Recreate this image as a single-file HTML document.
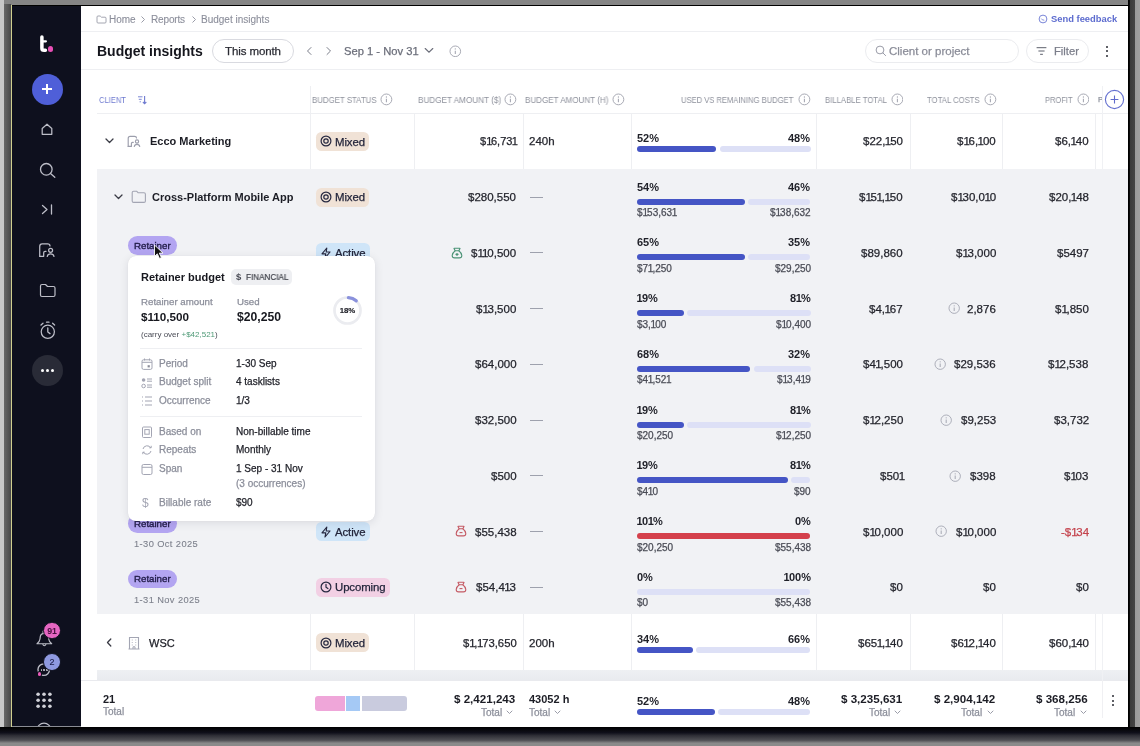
<!DOCTYPE html><html><head><meta charset="utf-8"><style>
html,body{margin:0;padding:0;}
body{width:1140px;height:746px;position:relative;overflow:hidden;background:#9a9a9a;font-family:"Liberation Sans",sans-serif;}
.t{position:absolute;white-space:nowrap;will-change:transform;}
.r{-webkit-text-stroke:0.25px currentColor;}
.b{position:absolute;}
</style></head><body>
<div class="b" style="left:0px;top:0px;width:1140px;height:4.5px;background:#858585"></div>
<div class="b" style="left:0px;top:4.5px;width:1140px;height:1px;background:#d8d8d8"></div>
<div class="b" style="left:0px;top:0px;width:4px;height:746px;background:#c8c8c8"></div>
<div class="b" style="left:4px;top:4px;width:6.5px;height:742px;background:linear-gradient(90deg,#686868,#484848)"></div>
<div class="b" style="left:1128px;top:0px;width:12px;height:746px;background:linear-gradient(90deg,#000 0,#000 12%,#3a3a3a 15%,#444 55%,#9a9a9a 60%,#a0a0a0)"></div>
<div class="b" style="left:0px;top:727px;width:1140px;height:19px;background:linear-gradient(180deg,#000 0,#0f0f1a 30%,#2e2e36 45%,#505055 70%,#8a8a8a 85%)"></div>
<div class="b" style="left:11px;top:5px;width:1118px;height:1px;background:#000"></div>
<div class="b" style="left:10.5px;top:5px;width:1.5px;height:722px;background:#d0d090"></div>
<div class="b" style="left:12px;top:6px;width:1116px;height:721px;background:#fff"></div>
<div class="b" style="left:12px;top:6px;width:69px;height:721px;background:#0e101e"></div>
<div class="b" style="left:81px;top:31px;width:1047px;height:1px;background:#eeeff2"></div>
<div class="b" style="left:81px;top:69px;width:1047px;height:1px;background:#eeeff2"></div>
<svg class="b" style="left:36px;top:33px;" width="20" height="22" viewBox="0 0 20 22" fill="none"><path d="M5.9 4 V15.2 Q5.9 17.3 8.1 17.3 H9.4" stroke="#fff" stroke-width="3.5" stroke-linecap="round" stroke-linejoin="round"/><path d="M5.9 8.3 H9.9" stroke="#fff" stroke-width="2.2" stroke-linecap="round"/></svg>
<div class="b" style="left:48.1px;top:46.4px;width:5.4px;height:5.4px;background:#e84fb6;border-radius:50%"></div>
<div class="b" style="left:31.8px;top:73.5px;width:31px;height:31px;background:#4f5fd8;border-radius:50%"></div>
<div class="b" style="left:42px;top:88.2px;width:10px;height:1.7px;background:#fff"></div>
<div class="b" style="left:46.2px;top:84px;width:1.7px;height:10px;background:#fff"></div>
<svg class="b" style="left:40px;top:122px;" width="14" height="14" viewBox="0 0 14 14" fill="none"><path d="M2.2 6.5 L7 2.2 L11.8 6.5 V12.3 H2.2 Z" stroke="#bdbec8" stroke-width="1.25" stroke-linejoin="round"/></svg>
<svg class="b" style="left:39px;top:162px;" width="18" height="17" viewBox="0 0 18 17" fill="none"><circle cx="7.3" cy="7.3" r="5.8" stroke="#bdbec8" stroke-width="1.3"/><path d="M11.5 11.5 L15.8 15.3" stroke="#bdbec8" stroke-width="1.3" stroke-linecap="round"/></svg>
<svg class="b" style="left:41px;top:204px;" width="13" height="12" viewBox="0 0 13 12" fill="none"><path d="M1.5 1.5 L6 5.5 L1.5 9.5" stroke="#bdbec8" stroke-width="1.3" stroke-linecap="round" stroke-linejoin="round"/><path d="M10.5 1 V10" stroke="#bdbec8" stroke-width="1.3" stroke-linecap="round"/></svg>
<svg class="b" style="left:37.3px;top:241px" width="19.8" height="18.6" viewBox="0 0 16 15" fill="none"><path d="M2.2 12.4 V4.4 Q2.2 2.4 4.2 2.4 H8.5 Q10.5 2.4 10.5 4" stroke="#bdbec8" stroke-width="1.0" stroke-linecap="round"/><path d="M2.2 12.4 H5.4 V9.5 Q5.4 8.3 6.6 8.3 H7.3" stroke="#bdbec8" stroke-width="1.0" stroke-linecap="round" stroke-linejoin="round"/><circle cx="11" cy="7.5" r="1.6" stroke="#bdbec8" stroke-width="1.0"/><path d="M8.3 12.5 Q8.6 10.3 11 10.3 Q13.4 10.3 13.7 12.5" stroke="#bdbec8" stroke-width="1.0" stroke-linecap="round"/></svg>
<svg class="b" style="left:38.5px;top:283px;" width="18" height="15" viewBox="0 0 18 15" fill="none"><path d="M1.5 3 Q1.5 1.5 3 1.5 H6.5 L8.5 3.5 H14.5 Q16 3.5 16 5 V12 Q16 13.5 14.5 13.5 H3 Q1.5 13.5 1.5 12 Z" stroke="#bdbec8" stroke-width="1.2" stroke-linejoin="round"/></svg>
<svg class="b" style="left:38.5px;top:321px;" width="18" height="19" viewBox="0 0 18 19" fill="none"><circle cx="8.8" cy="10.8" r="6.6" stroke="#bdbec8" stroke-width="1.25"/><path d="M8.8 7 V11 L11 12.6" stroke="#bdbec8" stroke-width="1.3" stroke-linecap="round"/><path d="M2 4 L4 2.2 M15.6 4 L13.6 2.2 M7.5 1.2 H10" stroke="#bdbec8" stroke-width="1.3" stroke-linecap="round"/></svg>
<div class="b" style="left:31.8px;top:354.5px;width:31px;height:31px;background:#292b37;border-radius:50%"></div>
<div class="b" style="left:41px;top:368.5px;width:3px;height:3px;background:#fff;border-radius:50%"></div>
<div class="b" style="left:46px;top:368.5px;width:3px;height:3px;background:#fff;border-radius:50%"></div>
<div class="b" style="left:51px;top:368.5px;width:3px;height:3px;background:#fff;border-radius:50%"></div>
<svg class="b" style="left:35px;top:627px;" width="20" height="22" viewBox="0 0 20 22" fill="none"><circle cx="9.35" cy="4.9" r="1.4" stroke="#bdbec8" stroke-width="1.2"/><path d="M2 16.75 Q4.6 15 5 12 L5.3 9.5 Q5.8 6.3 9.35 6.3 Q12.9 6.3 13.4 9.5 L13.7 12 Q14.1 15 16.7 16.75 Z" stroke="#bdbec8" stroke-width="1.2" stroke-linejoin="round"/><path d="M7.6 17.3 Q9.35 20.2 11.1 17.3" stroke="#bdbec8" stroke-width="1.2"/></svg>
<div class="b" style="left:43.1px;top:621.5px;width:17.8px;height:17.8px;background:#e666c2;border-radius:50%;box-sizing:border-box;border:1.2px solid #0e101e"></div>
<div class="t" style="left:43.1px;top:625.60px;font-size:8.8px;font-weight:700;color:#4a1040;line-height:10px;width:17.8px;text-align:center;letter-spacing:-0.2px">91</div>
<svg class="b" style="left:35px;top:661px;" width="18" height="18" viewBox="0 0 18 18" fill="none"><circle cx="8.75" cy="8.6" r="5.8" stroke="#bdbec8" stroke-width="1.35"/></svg>
<div class="b" style="left:40.75px;top:669.1px;width:1.5px;height:1.5px;background:#bdbec8;border-radius:50%"></div>
<div class="b" style="left:43.45px;top:669.1px;width:1.5px;height:1.5px;background:#bdbec8;border-radius:50%"></div>
<div class="b" style="left:46.15px;top:669.1px;width:1.5px;height:1.5px;background:#bdbec8;border-radius:50%"></div>
<div class="b" style="left:37.6px;top:672.3px;width:3.4px;height:3.4px;background:#e85bb8;border-radius:50%;box-shadow:0 0 0 1px #0e101e"></div>
<div class="b" style="left:42.9px;top:653.2px;width:17.8px;height:17.8px;background:#8e99e0;border-radius:50%;box-sizing:border-box;border:1.2px solid #0e101e"></div>
<div class="t r" style="left:42.9px;top:657.30px;font-size:9px;font-weight:400;color:#1a1d48;line-height:10px;width:17.8px;text-align:center;-webkit-text-stroke:0.1px currentColor">2</div>
<svg class="b" style="left:34px;top:690px;" width="20" height="20" viewBox="0 0 20 20" fill="none"><circle cx="4.100000000000001" cy="4.2999999999999545" r="1.8" fill="#d0d1d8"/><circle cx="10" cy="4.2999999999999545" r="1.8" fill="#d0d1d8"/><circle cx="15.899999999999999" cy="4.2999999999999545" r="1.8" fill="#d0d1d8"/><circle cx="4.100000000000001" cy="10.299999999999955" r="1.8" fill="#d0d1d8"/><circle cx="10" cy="10.299999999999955" r="1.8" fill="#d0d1d8"/><circle cx="15.899999999999999" cy="10.299999999999955" r="1.8" fill="#d0d1d8"/><circle cx="4.100000000000001" cy="16.200000000000045" r="1.8" fill="#d0d1d8"/><circle cx="10" cy="16.200000000000045" r="1.8" fill="#d0d1d8"/><circle cx="15.899999999999999" cy="16.200000000000045" r="1.8" fill="#d0d1d8"/></svg>
<svg class="b" style="left:35.2px;top:720px;" width="18" height="7" viewBox="0 0 18 7" fill="none"><circle cx="9" cy="10" r="6.8" stroke="#bdbec8" stroke-width="1.2"/></svg>
<div class="b" style="left:12px;top:726px;width:69px;height:1px;background:#8a8c94"></div>
<svg class="b" style="left:96px;top:14.5px;" width="11" height="9" viewBox="0 0 11 9" fill="none"><path d="M1 2 Q1 1 2 1 H4.2 L5.4 2.2 H9 Q10 2.2 10 3.2 V7 Q10 8 9 8 H2 Q1 8 1 7 Z" stroke="#9a9ca8" stroke-width="0.9"/></svg>
<div class="t r" style="left:109.3px;top:13.20px;font-size:10px;font-weight:400;color:#8b8e9a;line-height:14px;-webkit-text-stroke:0.1px currentColor">Home</div>
<svg class="b" style="left:140px;top:15px;" width="6" height="9" viewBox="0 0 6 9" fill="none"><path d="M1.5 1.5 L4.5 4.5 L1.5 7.5" stroke="#9a9ca8" stroke-width="1"/></svg>
<div class="t r" style="left:150.9px;top:13.20px;font-size:10px;font-weight:400;color:#8b8e9a;line-height:14px;letter-spacing:-0.15px;-webkit-text-stroke:0.1px currentColor">Reports</div>
<svg class="b" style="left:190.5px;top:15px;" width="6" height="9" viewBox="0 0 6 9" fill="none"><path d="M1.5 1.5 L4.5 4.5 L1.5 7.5" stroke="#9a9ca8" stroke-width="1"/></svg>
<div class="t r" style="left:201.4px;top:13.20px;font-size:10px;font-weight:400;color:#8b8e9a;line-height:14px;-webkit-text-stroke:0.1px currentColor">Budget insights</div>
<svg class="b" style="left:1038px;top:13.5px;" width="10" height="10" viewBox="0 0 10 10" fill="none"><circle cx="5" cy="5" r="3.9" stroke="#7a86d8" stroke-width="1"/><path d="M3.3 4.6 Q4 6.3 6.3 6.2" stroke="#7a86d8" stroke-width="0.9"/></svg>
<div class="t" style="left:1051px;top:12.00px;font-size:9.4px;font-weight:700;color:#5d6ccf;line-height:14px;">Send feedback</div>
<div class="t" style="left:96.7px;top:44.00px;font-size:14px;font-weight:700;color:#15161d;line-height:14px;">Budget insights</div>
<div class="b" style="left:212.3px;top:39px;width:81.7px;height:24.3px;box-sizing:border-box;border:1px solid #d9dae0;border-radius:13px;background:#fff"></div>
<div class="t r" style="left:225px;top:44.20px;font-size:11.5px;font-weight:400;color:#2a2b33;line-height:14px;letter-spacing:-0.1px">This month</div>
<svg class="b" style="left:305px;top:45px;" width="9" height="12" viewBox="0 0 9 12" fill="none"><path d="M6 2.5 L2.5 6 L6 9.5" stroke="#7b7e8a" stroke-width="1" stroke-linecap="round"/></svg>
<svg class="b" style="left:324px;top:45px;" width="9" height="12" viewBox="0 0 9 12" fill="none"><path d="M3 2.5 L6.5 6 L3 9.5" stroke="#7b7e8a" stroke-width="1" stroke-linecap="round"/></svg>
<div class="t r" style="left:344.3px;top:44.20px;font-size:11.2px;font-weight:400;color:#6b6e7a;line-height:14px;">Sep 1 - Nov 31</div>
<svg class="b" style="left:424px;top:47px;" width="10" height="7" viewBox="0 0 10 7" fill="none"><path d="M1.2 1.5 L5 5.2 L8.8 1.5" stroke="#6b6e7a" stroke-width="1.1" stroke-linecap="round"/></svg>
<svg class="b" style="left:449.0px;top:44.7px;" width="12.6" height="12.6" viewBox="0 0 12.6 12.6" fill="none"><circle cx="6.3" cy="6.3" r="5.3" stroke="#a3a5b0" stroke-width="0.95"/><path d="M6.3 5.7 V9.1" stroke="#a3a5b0" stroke-width="1.05"/><circle cx="6.3" cy="3.9" r="0.65" fill="#a3a5b0"/></svg>
<div class="b" style="left:865.3px;top:38.7px;width:153.4px;height:24.2px;box-sizing:border-box;border:1px solid #ebecef;border-radius:13px;background:#fff"></div>
<svg class="b" style="left:874.5px;top:45px;" width="12" height="12" viewBox="0 0 12 12" fill="none"><circle cx="5" cy="5" r="3.9" stroke="#9a9ca8" stroke-width="1"/><path d="M7.9 7.9 L10.6 10.6" stroke="#9a9ca8" stroke-width="1" stroke-linecap="round"/></svg>
<div class="t r" style="left:889.4px;top:44.00px;font-size:11.5px;font-weight:400;color:#8a8c98;line-height:14px;letter-spacing:0px">Client or project</div>
<div class="b" style="left:1026px;top:38.7px;width:62.7px;height:24.2px;box-sizing:border-box;border:1px solid #ebecef;border-radius:13px;background:#fff"></div>
<svg class="b" style="left:1036px;top:45.5px;" width="11" height="10" viewBox="0 0 11 10" fill="none"><path d="M1 1.7 H10 M2.8 5 H8.2 M4.5 8.3 H6.5" stroke="#5d606c" stroke-width="1" stroke-linecap="round"/></svg>
<div class="t r" style="left:1053.6px;top:44.00px;font-size:11.2px;font-weight:400;color:#7b7e8a;line-height:14px;">Filter</div>
<div class="b" style="left:1105.8px;top:45.699999999999996px;width:2.3px;height:2.3px;background:#2a2b33;border-radius:50%"></div>
<div class="b" style="left:1105.8px;top:50.1px;width:2.3px;height:2.3px;background:#2a2b33;border-radius:50%"></div>
<div class="b" style="left:1105.8px;top:54.5px;width:2.3px;height:2.3px;background:#2a2b33;border-radius:50%"></div>
<div class="b" style="left:96.5px;top:168.72px;width:1031.5px;height:445.76px;background:#f1f2f5"></div>
<div class="b" style="left:96.5px;top:670.2px;width:1031.5px;height:9.6px;background:linear-gradient(180deg,#eef0f3,#e9ebef)"></div>
<div class="b" style="left:81px;top:679.8px;width:1047px;height:1px;background:#e9eaee"></div>
<div class="b" style="left:96.5px;top:113px;width:1031.5px;height:1px;background:#eeeff2"></div>
<div class="b" style="left:309.6px;top:85.5px;width:1px;height:27.5px;background:#eeeff2"></div>
<div class="b" style="left:309.6px;top:113px;width:1px;height:55.72px;background:#eeeff2"></div>
<div class="b" style="left:309.6px;top:614.48px;width:1px;height:55.72000000000003px;background:#eeeff2"></div>
<div class="b" style="left:414px;top:113px;width:1px;height:55.72px;background:#eeeff2"></div>
<div class="b" style="left:414px;top:614.48px;width:1px;height:55.72000000000003px;background:#eeeff2"></div>
<div class="b" style="left:522.7px;top:113px;width:1px;height:55.72px;background:#eeeff2"></div>
<div class="b" style="left:522.7px;top:614.48px;width:1px;height:55.72000000000003px;background:#eeeff2"></div>
<div class="b" style="left:630.5px;top:113px;width:1px;height:55.72px;background:#eeeff2"></div>
<div class="b" style="left:630.5px;top:614.48px;width:1px;height:55.72000000000003px;background:#eeeff2"></div>
<div class="b" style="left:816.3px;top:113px;width:1px;height:55.72px;background:#eeeff2"></div>
<div class="b" style="left:816.3px;top:614.48px;width:1px;height:55.72000000000003px;background:#eeeff2"></div>
<div class="b" style="left:909.7px;top:113px;width:1px;height:55.72px;background:#eeeff2"></div>
<div class="b" style="left:909.7px;top:614.48px;width:1px;height:55.72000000000003px;background:#eeeff2"></div>
<div class="b" style="left:1002.1px;top:113px;width:1px;height:55.72px;background:#eeeff2"></div>
<div class="b" style="left:1002.1px;top:614.48px;width:1px;height:55.72000000000003px;background:#eeeff2"></div>
<div class="b" style="left:1095.1px;top:113px;width:1px;height:55.72px;background:#eeeff2"></div>
<div class="b" style="left:1095.1px;top:614.48px;width:1px;height:55.72000000000003px;background:#eeeff2"></div>
<div class="b" style="left:1101.5px;top:85.5px;width:1px;height:83.22px;background:#f0f1f4"></div>
<div class="b" style="left:1101.5px;top:614.48px;width:1px;height:65.51999999999998px;background:#f0f1f4"></div>
<div class="b" style="left:96.5px;top:168.72px;width:1031.5px;height:0px;"></div>
<div class="t" style="left:99.47px;top:93.30px;font-size:8.5px;color:#6f7bd0;line-height:14px;transform:scaleX(0.8900);transform-origin:0 0;">CLIENT</div>
<svg class="b" style="left:137px;top:95px;" width="10" height="10" viewBox="0 0 10 10" fill="none"><path d="M1 1.8 H5.5 M1.8 4.3 H4.7 M2.6 6.8 H3.9" stroke="#7b86d4" stroke-width="1"/><path d="M7.6 1 V8.6 M5.9 7 L7.6 8.8 L9.3 7" stroke="#6f7bd0" stroke-width="1.1"/></svg>
<div class="t" style="left:312.45px;top:93.30px;font-size:8.5px;color:#8e919c;line-height:14px;transform:scaleX(0.9246);transform-origin:0 0;">BUDGET STATUS</div>
<svg class="b" style="left:380.20000000000005px;top:93.3px;" width="12.8" height="12.8" viewBox="0 0 12.8 12.8" fill="none"><circle cx="6.4" cy="6.4" r="5.4" stroke="#a3a5b0" stroke-width="0.95"/><path d="M6.4 5.800000000000001 V9.2" stroke="#a3a5b0" stroke-width="1.05"/><circle cx="6.4" cy="4.0" r="0.65" fill="#a3a5b0"/></svg>
<div class="t" style="left:418.42px;top:93.30px;font-size:8.5px;color:#8e919c;line-height:14px;transform:scaleX(0.9600);transform-origin:0 0;">BUDGET AMOUNT ($)</div>
<svg class="b" style="left:504.0px;top:93.3px;" width="12.8" height="12.8" viewBox="0 0 12.8 12.8" fill="none"><circle cx="6.4" cy="6.4" r="5.4" stroke="#a3a5b0" stroke-width="0.95"/><path d="M6.4 5.800000000000001 V9.2" stroke="#a3a5b0" stroke-width="1.05"/><circle cx="6.4" cy="4.0" r="0.65" fill="#a3a5b0"/></svg>
<div class="t" style="left:525.33px;top:93.30px;font-size:8.5px;color:#8e919c;line-height:14px;transform:scaleX(0.9471);transform-origin:0 0;">BUDGET AMOUNT (H)</div>
<svg class="b" style="left:611.8000000000001px;top:93.3px;" width="12.8" height="12.8" viewBox="0 0 12.8 12.8" fill="none"><circle cx="6.4" cy="6.4" r="5.4" stroke="#a3a5b0" stroke-width="0.95"/><path d="M6.4 5.800000000000001 V9.2" stroke="#a3a5b0" stroke-width="1.05"/><circle cx="6.4" cy="4.0" r="0.65" fill="#a3a5b0"/></svg>
<div class="t" style="left:680.96px;top:93.30px;font-size:8.5px;color:#8e919c;line-height:14px;transform:scaleX(0.8929);transform-origin:0 0;">USED VS REMAINING BUDGET</div>
<svg class="b" style="left:797.8000000000001px;top:93.3px;" width="12.8" height="12.8" viewBox="0 0 12.8 12.8" fill="none"><circle cx="6.4" cy="6.4" r="5.4" stroke="#a3a5b0" stroke-width="0.95"/><path d="M6.4 5.800000000000001 V9.2" stroke="#a3a5b0" stroke-width="1.05"/><circle cx="6.4" cy="4.0" r="0.65" fill="#a3a5b0"/></svg>
<div class="t" style="left:824.95px;top:93.30px;font-size:8.5px;color:#8e919c;line-height:14px;transform:scaleX(0.9104);transform-origin:0 0;">BILLABLE TOTAL</div>
<svg class="b" style="left:890.6px;top:93.3px;" width="12.8" height="12.8" viewBox="0 0 12.8 12.8" fill="none"><circle cx="6.4" cy="6.4" r="5.4" stroke="#a3a5b0" stroke-width="0.95"/><path d="M6.4 5.800000000000001 V9.2" stroke="#a3a5b0" stroke-width="1.05"/><circle cx="6.4" cy="4.0" r="0.65" fill="#a3a5b0"/></svg>
<div class="t" style="left:927.05px;top:93.30px;font-size:8.5px;color:#8e919c;line-height:14px;transform:scaleX(0.9086);transform-origin:0 0;">TOTAL COSTS</div>
<svg class="b" style="left:983.8000000000001px;top:93.3px;" width="12.8" height="12.8" viewBox="0 0 12.8 12.8" fill="none"><circle cx="6.4" cy="6.4" r="5.4" stroke="#a3a5b0" stroke-width="0.95"/><path d="M6.4 5.800000000000001 V9.2" stroke="#a3a5b0" stroke-width="1.05"/><circle cx="6.4" cy="4.0" r="0.65" fill="#a3a5b0"/></svg>
<div class="t" style="left:1045.47px;top:93.30px;font-size:8.5px;color:#8e919c;line-height:14px;transform:scaleX(0.8867);transform-origin:0 0;">PROFIT</div>
<svg class="b" style="left:1076.6px;top:93.3px;" width="12.8" height="12.8" viewBox="0 0 12.8 12.8" fill="none"><circle cx="6.4" cy="6.4" r="5.4" stroke="#a3a5b0" stroke-width="0.95"/><path d="M6.4 5.800000000000001 V9.2" stroke="#a3a5b0" stroke-width="1.05"/><circle cx="6.4" cy="4.0" r="0.65" fill="#a3a5b0"/></svg>
<div class="t r" style="left:1098px;top:93.00px;font-size:7.75px;font-weight:400;color:#8e919c;line-height:14px;width:3.5px;overflow:hidden">P</div>
<svg class="b" style="left:1104px;top:89px;" width="21" height="21" viewBox="0 0 21 21" fill="none"><circle cx="10.5" cy="10.5" r="9.1" stroke="#6672d0" stroke-width="1.15" fill="#fff"/><path d="M6.6 10.5 H14.4 M10.5 6.6 V14.4" stroke="#5f6acb" stroke-width="1.1"/></svg>
<svg class="b" style="left:104.5px;top:138.46px;" width="9" height="6" viewBox="0 0 9 6" fill="none"><path d="M1 1 L4.5 4.5 L8 1" stroke="#3a3b45" stroke-width="1.3" stroke-linecap="round" stroke-linejoin="round"/></svg>
<svg class="b" style="left:126px;top:134px;" width="16" height="15" viewBox="0 0 16 15" fill="none"><path d="M2.2 12.4 V4.4 Q2.2 2.4 4.2 2.4 H8.5 Q10.5 2.4 10.5 4" stroke="#9c9eac" stroke-width="1.15" stroke-linecap="round"/><path d="M2.2 12.4 H5.4 V9.5 Q5.4 8.3 6.6 8.3 H7.3" stroke="#9c9eac" stroke-width="1.15" stroke-linecap="round" stroke-linejoin="round"/><circle cx="11" cy="7.5" r="1.6" stroke="#9c9eac" stroke-width="1.15"/><path d="M8.3 12.5 Q8.6 10.3 11 10.3 Q13.4 10.3 13.7 12.5" stroke="#9c9eac" stroke-width="1.15" stroke-linecap="round"/></svg>
<div class="t" style="left:149.5px;top:134.46px;font-size:11px;font-weight:700;color:#1c1d25;line-height:14px;">Ecco Marketing</div>
<div class="b" style="left:316.2px;top:131.96px;width:53px;height:19px;background:#f0e2d6;border-radius:5.5px"></div>
<svg class="b" style="left:320.2px;top:135.46px" width="12" height="12" viewBox="0 0 12 12" fill="none"><circle cx="6" cy="6" r="4.9" stroke="#262840" stroke-width="1.2"/><circle cx="6" cy="6" r="2.2" stroke="#262840" stroke-width="1.2"/></svg>
<div class="t r" style="left:334.9px;top:134.66px;font-size:11.4px;font-weight:400;color:#22243a;line-height:14px;letter-spacing:-0.1px">Mixed</div>
<div class="t r" style="right:623.0px;top:134.46px;font-size:11px;font-weight:400;color:#23242c;line-height:14px;text-align:right;">$<span style="letter-spacing:-1.28px">1</span>6,73<span style="margin-left:-0.56px;letter-spacing:-1.04px">1</span></div>
<div class="t r" style="left:529px;top:134.46px;font-size:11.5px;font-weight:400;color:#23242c;line-height:14px;">240h</div>
<div class="t" style="left:637.4px;top:130.80px;font-size:11px;font-weight:700;color:#1f2028;line-height:14px;">52%</div>
<div class="t" style="right:329.5px;top:130.80px;font-size:11px;font-weight:700;color:#1f2028;line-height:14px;text-align:right;">48%</div>
<div class="b" style="left:637.4px;top:145.6px;width:78.70000000000005px;height:6px;background:#4555c5;border-radius:3px"></div>
<div class="b" style="left:719.5px;top:145.6px;width:91.0px;height:6px;background:#dde0f6;border-radius:3px"></div>
<div class="t r" style="right:237.10000000000002px;top:134.46px;font-size:11.5px;font-weight:400;color:#23242c;line-height:14px;text-align:right;">$22,<span style="margin-left:-0.56px;letter-spacing:-1.04px">1</span>50</div>
<div class="t r" style="right:144.20000000000005px;top:134.46px;font-size:11.5px;font-weight:400;color:#23242c;line-height:14px;text-align:right;">$<span style="letter-spacing:-1.28px">1</span>6,<span style="margin-left:-0.56px;letter-spacing:-1.04px">1</span>00</div>
<div class="t r" style="right:51.299999999999955px;top:134.46px;font-size:11.5px;font-weight:400;color:#23242c;line-height:14px;text-align:right;">$6,<span style="margin-left:-0.56px;letter-spacing:-1.04px">1</span>40</div>
<svg class="b" style="left:113.8px;top:194.17999999999998px;" width="9" height="6" viewBox="0 0 9 6" fill="none"><path d="M1 1 L4.5 4.5 L8 1" stroke="#3a3b45" stroke-width="1.3" stroke-linecap="round" stroke-linejoin="round"/></svg>
<svg class="b" style="left:130.5px;top:189.5px;" width="16" height="14" viewBox="0 0 16 14" fill="none"><path d="M1.2 2.6 Q1.2 1.2 2.6 1.2 H5.6 L7.2 2.8 H13 Q14.4 2.8 14.4 4.2 V11 Q14.4 12.4 13 12.4 H2.6 Q1.2 12.4 1.2 11 Z" stroke="#a3a5b3" stroke-width="1.1" stroke-linejoin="round"/></svg>
<div class="t" style="left:152.4px;top:190.18px;font-size:11px;font-weight:700;color:#1c1d25;line-height:14px;">Cross-Platform Mobile App</div>
<div class="b" style="left:316.2px;top:187.67999999999998px;width:53px;height:19px;background:#f0e2d6;border-radius:5.5px"></div>
<svg class="b" style="left:320.2px;top:191.17999999999998px" width="12" height="12" viewBox="0 0 12 12" fill="none"><circle cx="6" cy="6" r="4.9" stroke="#262840" stroke-width="1.2"/><circle cx="6" cy="6" r="2.2" stroke="#262840" stroke-width="1.2"/></svg>
<div class="t r" style="left:334.9px;top:190.38px;font-size:11.4px;font-weight:400;color:#22243a;line-height:14px;letter-spacing:-0.1px">Mixed</div>
<div class="t r" style="right:623.7px;top:190.18px;font-size:11.5px;font-weight:400;color:#23242c;line-height:14px;text-align:right;">$280,550</div>
<div class="b" style="left:530.4px;top:197px;width:12.6px;height:1px;background:#9ea1ad"></div>
<div class="t" style="left:637.4px;top:179.72px;font-size:11px;font-weight:700;color:#1f2028;line-height:14px;">54%</div>
<div class="t" style="right:329.5px;top:179.72px;font-size:11px;font-weight:700;color:#1f2028;line-height:14px;text-align:right;">46%</div>
<div class="b" style="left:637.4px;top:198.72px;width:107.30000000000007px;height:6px;background:#4555c5;border-radius:3px"></div>
<div class="b" style="left:747.8px;top:198.72px;width:62.700000000000045px;height:6px;background:#dde0f6;border-radius:3px"></div>
<div class="t r" style="left:637.4px;top:206.22px;font-size:10px;font-weight:400;color:#4a4c56;line-height:14px;">$<span style="letter-spacing:-1.04px">1</span>53,63<span style="margin-left:-0.45px;letter-spacing:-0.85px">1</span></div>
<div class="t r" style="right:329.20000000000005px;top:206.22px;font-size:10px;font-weight:400;color:#4a4c56;line-height:14px;text-align:right;">$<span style="letter-spacing:-1.04px">1</span>38,632</div>
<div class="t r" style="right:237.10000000000002px;top:190.18px;font-size:11.5px;font-weight:400;color:#23242c;line-height:14px;text-align:right;">$<span style="letter-spacing:-1.28px">1</span>5<span style="margin-left:-0.56px;letter-spacing:-1.04px">1</span>,<span style="margin-left:-0.56px;letter-spacing:-1.04px">1</span>50</div>
<div class="t r" style="right:144.20000000000005px;top:190.18px;font-size:11.5px;font-weight:400;color:#23242c;line-height:14px;text-align:right;">$<span style="letter-spacing:-1.28px">1</span>30,0<span style="margin-left:-0.56px;letter-spacing:-1.04px">1</span>0</div>
<div class="t r" style="right:51.299999999999955px;top:190.18px;font-size:11.5px;font-weight:400;color:#23242c;line-height:14px;text-align:right;">$20,<span style="margin-left:-0.56px;letter-spacing:-1.04px">1</span>48</div>
<div class="b" style="left:316.4px;top:243.4px;width:54px;height:19px;background:#cfe5f8;border-radius:5.5px"></div>
<svg class="b" style="left:320px;top:246.9px" width="12" height="12" viewBox="0 0 12 12" fill="none"><path d="M6.8 1 L2 6.8 H5.8 L5 11 L10 5 H6.2 Z" stroke="#262840" stroke-width="1.15" stroke-linejoin="round"/></svg>
<div class="t r" style="left:335.09999999999997px;top:246.10px;font-size:11.4px;font-weight:400;color:#22243a;line-height:14px;letter-spacing:-0.1px">Active</div>
<svg class="b" style="left:451.2px;top:246.70000000000002px;" width="12" height="12" viewBox="0 0 12 12" fill="none"><path d="M3.4 1.2 H8.6 Q9.2 1.2 8.9 1.8 L7.8 3.7 H4.2 L3.1 1.8 Q2.8 1.2 3.4 1.2 Z" stroke="#4a9275" stroke-width="1.1" stroke-linejoin="round"/><path d="M4.2 3.7 Q1.2 6 1.2 8.5 Q1.2 10.9 3.6 10.9 H8.4 Q10.8 10.9 10.8 8.5 Q10.8 6 7.8 3.7" stroke="#4a9275" stroke-width="1.1"/><path d="M6 5.9 V8.9 M4.5 7.4 H7.5" stroke="#4a9275" stroke-width="1.1"/></svg>
<div class="t r" style="right:623.7px;top:245.90px;font-size:11.5px;font-weight:400;color:#23242c;line-height:14px;text-align:right;">$<span style="letter-spacing:-1.28px">1</span><span style="margin-left:-0.56px;letter-spacing:-1.04px">1</span>0,500</div>
<div class="b" style="left:530.4px;top:252px;width:12.6px;height:1px;background:#9ea1ad"></div>
<div class="t" style="left:637.4px;top:235.44px;font-size:11px;font-weight:700;color:#1f2028;line-height:14px;">65%</div>
<div class="t" style="right:329.5px;top:235.44px;font-size:11px;font-weight:700;color:#1f2028;line-height:14px;text-align:right;">35%</div>
<div class="b" style="left:637.4px;top:254.44px;width:107.30000000000007px;height:6px;background:#4555c5;border-radius:3px"></div>
<div class="b" style="left:747.8px;top:254.44px;width:62.700000000000045px;height:6px;background:#dde0f6;border-radius:3px"></div>
<div class="t r" style="left:637.4px;top:261.94px;font-size:10px;font-weight:400;color:#4a4c56;line-height:14px;">$7<span style="margin-left:-0.45px;letter-spacing:-0.85px">1</span>,250</div>
<div class="t r" style="right:329.20000000000005px;top:261.94px;font-size:10px;font-weight:400;color:#4a4c56;line-height:14px;text-align:right;">$29,250</div>
<div class="t r" style="right:237.10000000000002px;top:245.90px;font-size:11.5px;font-weight:400;color:#23242c;line-height:14px;text-align:right;">$89,860</div>
<div class="t r" style="right:144.20000000000005px;top:245.90px;font-size:11.5px;font-weight:400;color:#23242c;line-height:14px;text-align:right;">$<span style="letter-spacing:-1.28px">1</span>3,000</div>
<div class="t r" style="right:51.299999999999955px;top:245.90px;font-size:11.5px;font-weight:400;color:#23242c;line-height:14px;text-align:right;">$5497</div>
<div class="t r" style="right:623.7px;top:301.62px;font-size:11.5px;font-weight:400;color:#23242c;line-height:14px;text-align:right;">$<span style="letter-spacing:-1.28px">1</span>3,500</div>
<div class="b" style="left:530.4px;top:308px;width:12.6px;height:1px;background:#9ea1ad"></div>
<div class="t" style="left:637.4px;top:291.16px;font-size:11px;font-weight:700;color:#1f2028;line-height:14px;"><span style="margin-left:-0.42px;letter-spacing:-0.78px">1</span>9%</div>
<div class="t" style="right:329.5px;top:291.16px;font-size:11px;font-weight:700;color:#1f2028;line-height:14px;text-align:right;">8<span style="margin-left:-0.42px;letter-spacing:-0.78px">1</span>%</div>
<div class="b" style="left:637.4px;top:310.15999999999997px;width:46.30000000000007px;height:6px;background:#4555c5;border-radius:3px"></div>
<div class="b" style="left:687px;top:310.15999999999997px;width:123.5px;height:6px;background:#dde0f6;border-radius:3px"></div>
<div class="t r" style="left:637.4px;top:317.66px;font-size:10px;font-weight:400;color:#4a4c56;line-height:14px;">$3,<span style="margin-left:-0.45px;letter-spacing:-0.85px">1</span>00</div>
<div class="t r" style="right:329.20000000000005px;top:317.66px;font-size:10px;font-weight:400;color:#4a4c56;line-height:14px;text-align:right;">$<span style="letter-spacing:-1.04px">1</span>0,400</div>
<div class="t r" style="right:237.10000000000002px;top:301.62px;font-size:11.5px;font-weight:400;color:#23242c;line-height:14px;text-align:right;">$4,<span style="margin-left:-0.56px;letter-spacing:-1.04px">1</span>67</div>
<div class="t r" style="right:144.20000000000005px;top:301.62px;font-size:11.5px;font-weight:400;color:#23242c;line-height:14px;text-align:right;">2,876</div>
<svg class="b" style="left:948.3px;top:302.42px;" width="12.4" height="12.4" viewBox="0 0 12.4 12.4" fill="none"><circle cx="6.2" cy="6.2" r="5.2" stroke="#a9abb6" stroke-width="0.95"/><path d="M6.2 5.6000000000000005 V9.0" stroke="#a9abb6" stroke-width="1.05"/><circle cx="6.2" cy="3.8000000000000003" r="0.65" fill="#a9abb6"/></svg>
<div class="t r" style="right:51.299999999999955px;top:301.62px;font-size:11.5px;font-weight:400;color:#23242c;line-height:14px;text-align:right;">$<span style="letter-spacing:-1.28px">1</span>,850</div>
<div class="t r" style="right:623.7px;top:357.34px;font-size:11.5px;font-weight:400;color:#23242c;line-height:14px;text-align:right;">$64,000</div>
<div class="b" style="left:530.4px;top:364px;width:12.6px;height:1px;background:#9ea1ad"></div>
<div class="t" style="left:637.4px;top:346.88px;font-size:11px;font-weight:700;color:#1f2028;line-height:14px;">68%</div>
<div class="t" style="right:329.5px;top:346.88px;font-size:11px;font-weight:700;color:#1f2028;line-height:14px;text-align:right;">32%</div>
<div class="b" style="left:637.4px;top:365.88px;width:112.39999999999998px;height:6px;background:#4555c5;border-radius:3px"></div>
<div class="b" style="left:753.5px;top:365.88px;width:57.0px;height:6px;background:#dde0f6;border-radius:3px"></div>
<div class="t r" style="left:637.4px;top:373.38px;font-size:10px;font-weight:400;color:#4a4c56;line-height:14px;">$4<span style="margin-left:-0.45px;letter-spacing:-0.85px">1</span>,52<span style="margin-left:-0.45px;letter-spacing:-0.85px">1</span></div>
<div class="t r" style="right:329.20000000000005px;top:373.38px;font-size:10px;font-weight:400;color:#4a4c56;line-height:14px;text-align:right;">$<span style="letter-spacing:-1.04px">1</span>3,4<span style="margin-left:-0.45px;letter-spacing:-0.85px">1</span>9</div>
<div class="t r" style="right:237.10000000000002px;top:357.34px;font-size:11.5px;font-weight:400;color:#23242c;line-height:14px;text-align:right;">$4<span style="margin-left:-0.56px;letter-spacing:-1.04px">1</span>,500</div>
<div class="t r" style="right:144.20000000000005px;top:357.34px;font-size:11.5px;font-weight:400;color:#23242c;line-height:14px;text-align:right;">$29,536</div>
<svg class="b" style="left:933.8px;top:358.14000000000004px;" width="12.4" height="12.4" viewBox="0 0 12.4 12.4" fill="none"><circle cx="6.2" cy="6.2" r="5.2" stroke="#a9abb6" stroke-width="0.95"/><path d="M6.2 5.6000000000000005 V9.0" stroke="#a9abb6" stroke-width="1.05"/><circle cx="6.2" cy="3.8000000000000003" r="0.65" fill="#a9abb6"/></svg>
<div class="t r" style="right:51.299999999999955px;top:357.34px;font-size:11.5px;font-weight:400;color:#23242c;line-height:14px;text-align:right;">$<span style="letter-spacing:-1.28px">1</span>2,538</div>
<div class="t r" style="right:623.7px;top:413.06px;font-size:11.5px;font-weight:400;color:#23242c;line-height:14px;text-align:right;">$32,500</div>
<div class="b" style="left:530.4px;top:420px;width:12.6px;height:1px;background:#9ea1ad"></div>
<div class="t" style="left:637.4px;top:402.60px;font-size:11px;font-weight:700;color:#1f2028;line-height:14px;"><span style="margin-left:-0.42px;letter-spacing:-0.78px">1</span>9%</div>
<div class="t" style="right:329.5px;top:402.60px;font-size:11px;font-weight:700;color:#1f2028;line-height:14px;text-align:right;">8<span style="margin-left:-0.42px;letter-spacing:-0.78px">1</span>%</div>
<div class="b" style="left:637.4px;top:421.6px;width:46.30000000000007px;height:6px;background:#4555c5;border-radius:3px"></div>
<div class="b" style="left:687px;top:421.6px;width:123.5px;height:6px;background:#dde0f6;border-radius:3px"></div>
<div class="t r" style="left:637.4px;top:429.10px;font-size:10px;font-weight:400;color:#4a4c56;line-height:14px;">$20,250</div>
<div class="t r" style="right:329.20000000000005px;top:429.10px;font-size:10px;font-weight:400;color:#4a4c56;line-height:14px;text-align:right;">$<span style="letter-spacing:-1.04px">1</span>2,250</div>
<div class="t r" style="right:237.10000000000002px;top:413.06px;font-size:11.5px;font-weight:400;color:#23242c;line-height:14px;text-align:right;">$<span style="letter-spacing:-1.28px">1</span>2,250</div>
<div class="t r" style="right:144.20000000000005px;top:413.06px;font-size:11.5px;font-weight:400;color:#23242c;line-height:14px;text-align:right;">$9,253</div>
<svg class="b" style="left:940.3px;top:413.86000000000007px;" width="12.4" height="12.4" viewBox="0 0 12.4 12.4" fill="none"><circle cx="6.2" cy="6.2" r="5.2" stroke="#a9abb6" stroke-width="0.95"/><path d="M6.2 5.6000000000000005 V9.0" stroke="#a9abb6" stroke-width="1.05"/><circle cx="6.2" cy="3.8000000000000003" r="0.65" fill="#a9abb6"/></svg>
<div class="t r" style="right:51.299999999999955px;top:413.06px;font-size:11.5px;font-weight:400;color:#23242c;line-height:14px;text-align:right;">$3,732</div>
<div class="t r" style="right:623.7px;top:468.78px;font-size:11.5px;font-weight:400;color:#23242c;line-height:14px;text-align:right;">$500</div>
<div class="b" style="left:530.4px;top:475px;width:12.6px;height:1px;background:#9ea1ad"></div>
<div class="t" style="left:637.4px;top:458.32px;font-size:11px;font-weight:700;color:#1f2028;line-height:14px;"><span style="margin-left:-0.42px;letter-spacing:-0.78px">1</span>9%</div>
<div class="t" style="right:329.5px;top:458.32px;font-size:11px;font-weight:700;color:#1f2028;line-height:14px;text-align:right;">8<span style="margin-left:-0.42px;letter-spacing:-0.78px">1</span>%</div>
<div class="b" style="left:637.4px;top:477.32px;width:150.60000000000002px;height:6px;background:#4555c5;border-radius:3px"></div>
<div class="b" style="left:791.2px;top:477.32px;width:19.299999999999955px;height:6px;background:#dde0f6;border-radius:3px"></div>
<div class="t r" style="left:637.4px;top:484.82px;font-size:10px;font-weight:400;color:#4a4c56;line-height:14px;">$4<span style="margin-left:-0.45px;letter-spacing:-0.85px">1</span>0</div>
<div class="t r" style="right:329.20000000000005px;top:484.82px;font-size:10px;font-weight:400;color:#4a4c56;line-height:14px;text-align:right;">$90</div>
<div class="t r" style="right:236.39999999999998px;top:468.78px;font-size:11.5px;font-weight:400;color:#23242c;line-height:14px;text-align:right;">$50<span style="margin-left:-0.56px;letter-spacing:-1.04px">1</span></div>
<div class="t r" style="right:144.20000000000005px;top:468.78px;font-size:11.5px;font-weight:400;color:#23242c;line-height:14px;text-align:right;">$398</div>
<svg class="b" style="left:949.3px;top:469.58000000000004px;" width="12.4" height="12.4" viewBox="0 0 12.4 12.4" fill="none"><circle cx="6.2" cy="6.2" r="5.2" stroke="#a9abb6" stroke-width="0.95"/><path d="M6.2 5.6000000000000005 V9.0" stroke="#a9abb6" stroke-width="1.05"/><circle cx="6.2" cy="3.8000000000000003" r="0.65" fill="#a9abb6"/></svg>
<div class="t r" style="right:51.299999999999955px;top:468.78px;font-size:11.5px;font-weight:400;color:#23242c;line-height:14px;text-align:right;">$<span style="letter-spacing:-1.28px">1</span>03</div>
<div class="b" style="left:127.8px;top:514.04px;width:49.2px;height:18.7px;background:#b3a5f1;border-radius:9.4px"></div>
<div class="t r" style="left:134.0px;top:516.64px;font-size:9.7px;font-weight:400;color:#211c48;line-height:14px;-webkit-text-stroke:0.35px currentColor">Retainer</div>
<div class="t r" style="left:133.8px;top:536.84px;font-size:9.3px;font-weight:400;color:#7d808c;line-height:14px;letter-spacing:0.4px;-webkit-text-stroke:0.1px currentColor">1-30 Oct 2025</div>
<div class="b" style="left:316.4px;top:522.0px;width:54px;height:19px;background:#cfe5f8;border-radius:5.5px"></div>
<svg class="b" style="left:320px;top:525.5px" width="12" height="12" viewBox="0 0 12 12" fill="none"><path d="M6.8 1 L2 6.8 H5.8 L5 11 L10 5 H6.2 Z" stroke="#262840" stroke-width="1.15" stroke-linejoin="round"/></svg>
<div class="t r" style="left:335.09999999999997px;top:524.70px;font-size:11.4px;font-weight:400;color:#22243a;line-height:14px;letter-spacing:-0.1px">Active</div>
<svg class="b" style="left:454.7px;top:525.3px;" width="12" height="12" viewBox="0 0 12 12" fill="none"><path d="M3.4 1.2 H8.6 Q9.2 1.2 8.9 1.8 L7.8 3.7 H4.2 L3.1 1.8 Q2.8 1.2 3.4 1.2 Z" stroke="#c45a64" stroke-width="1.1" stroke-linejoin="round"/><path d="M4.2 3.7 Q1.2 6 1.2 8.5 Q1.2 10.9 3.6 10.9 H8.4 Q10.8 10.9 10.8 8.5 Q10.8 6 7.8 3.7" stroke="#c45a64" stroke-width="1.1"/><path d="M4.5 7.6 H7.5" stroke="#c45a64" stroke-width="1.1"/></svg>
<div class="t r" style="right:623.7px;top:524.50px;font-size:11.5px;font-weight:400;color:#23242c;line-height:14px;text-align:right;">$55,438</div>
<div class="b" style="left:530.4px;top:531px;width:12.6px;height:1px;background:#9ea1ad"></div>
<div class="t" style="left:637.4px;top:514.04px;font-size:11px;font-weight:700;color:#1f2028;line-height:14px;"><span style="margin-left:-0.42px;letter-spacing:-0.78px">1</span>0<span style="margin-left:-0.42px;letter-spacing:-0.78px">1</span>%</div>
<div class="t" style="right:329.5px;top:514.04px;font-size:11px;font-weight:700;color:#1f2028;line-height:14px;text-align:right;">0%</div>
<div class="b" style="left:637.4px;top:533.04px;width:173.1px;height:6px;background:#d4404b;border-radius:3px"></div>
<div class="t r" style="left:637.4px;top:540.54px;font-size:10px;font-weight:400;color:#4a4c56;line-height:14px;">$20,250</div>
<div class="t r" style="right:329.20000000000005px;top:540.54px;font-size:10px;font-weight:400;color:#4a4c56;line-height:14px;text-align:right;">$55,438</div>
<div class="t r" style="right:237.10000000000002px;top:524.50px;font-size:11.5px;font-weight:400;color:#23242c;line-height:14px;text-align:right;">$<span style="letter-spacing:-1.28px">1</span>0,000</div>
<svg class="b" style="left:934.8px;top:525.3px;" width="12.4" height="12.4" viewBox="0 0 12.4 12.4" fill="none"><circle cx="6.2" cy="6.2" r="5.2" stroke="#a9abb6" stroke-width="0.95"/><path d="M6.2 5.6000000000000005 V9.0" stroke="#a9abb6" stroke-width="1.05"/><circle cx="6.2" cy="3.8000000000000003" r="0.65" fill="#a9abb6"/></svg>
<div class="t r" style="right:144.20000000000005px;top:524.50px;font-size:11.5px;font-weight:400;color:#23242c;line-height:14px;text-align:right;">$<span style="letter-spacing:-1.28px">1</span>0,000</div>
<div class="t r" style="right:51.299999999999955px;top:524.50px;font-size:11.5px;font-weight:400;color:#c4434d;line-height:14px;text-align:right;">-$<span style="letter-spacing:-1.28px">1</span>34</div>
<div class="b" style="left:127.8px;top:569.76px;width:49.2px;height:18.7px;background:#b3a5f1;border-radius:9.4px"></div>
<div class="t r" style="left:134.0px;top:572.36px;font-size:9.7px;font-weight:400;color:#211c48;line-height:14px;-webkit-text-stroke:0.35px currentColor">Retainer</div>
<div class="t r" style="left:133.8px;top:592.56px;font-size:9.3px;font-weight:400;color:#7d808c;line-height:14px;letter-spacing:0.4px;-webkit-text-stroke:0.1px currentColor">1-31 Nov 2025</div>
<div class="b" style="left:316.4px;top:577.72px;width:73.4px;height:19px;background:#f2d0e4;border-radius:5.5px"></div>
<svg class="b" style="left:320px;top:581.22px" width="12" height="12" viewBox="0 0 12 12" fill="none"><circle cx="6" cy="6" r="4.9" stroke="#262840" stroke-width="1.2"/><path d="M6 3.3 V6.2 L7.9 7.6" stroke="#262840" stroke-width="1.2" stroke-linecap="round"/></svg>
<div class="t r" style="left:335.09999999999997px;top:580.42px;font-size:11.4px;font-weight:400;color:#22243a;line-height:14px;letter-spacing:-0.1px">Upcoming</div>
<svg class="b" style="left:454.7px;top:581.02px;" width="12" height="12" viewBox="0 0 12 12" fill="none"><path d="M3.4 1.2 H8.6 Q9.2 1.2 8.9 1.8 L7.8 3.7 H4.2 L3.1 1.8 Q2.8 1.2 3.4 1.2 Z" stroke="#c45a64" stroke-width="1.1" stroke-linejoin="round"/><path d="M4.2 3.7 Q1.2 6 1.2 8.5 Q1.2 10.9 3.6 10.9 H8.4 Q10.8 10.9 10.8 8.5 Q10.8 6 7.8 3.7" stroke="#c45a64" stroke-width="1.1"/><path d="M4.5 7.6 H7.5" stroke="#c45a64" stroke-width="1.1"/></svg>
<div class="t r" style="right:623.7px;top:580.22px;font-size:11.5px;font-weight:400;color:#23242c;line-height:14px;text-align:right;">$54,4<span style="margin-left:-0.56px;letter-spacing:-1.04px">1</span>3</div>
<div class="b" style="left:530.4px;top:587px;width:12.6px;height:1px;background:#9ea1ad"></div>
<div class="t" style="left:637.4px;top:569.76px;font-size:11px;font-weight:700;color:#1f2028;line-height:14px;">0%</div>
<div class="t" style="right:329.5px;top:569.76px;font-size:11px;font-weight:700;color:#1f2028;line-height:14px;text-align:right;"><span style="margin-left:-0.42px;letter-spacing:-0.78px">1</span>00%</div>
<div class="b" style="left:637.4px;top:588.76px;width:173.10000000000002px;height:6px;background:#dde0f6;border-radius:3px"></div>
<div class="t r" style="left:637.4px;top:596.26px;font-size:10px;font-weight:400;color:#4a4c56;line-height:14px;">$0</div>
<div class="t r" style="right:329.20000000000005px;top:596.26px;font-size:10px;font-weight:400;color:#4a4c56;line-height:14px;text-align:right;">$55,438</div>
<div class="t r" style="right:237.10000000000002px;top:580.22px;font-size:11.5px;font-weight:400;color:#23242c;line-height:14px;text-align:right;">$0</div>
<div class="t r" style="right:144.20000000000005px;top:580.22px;font-size:11.5px;font-weight:400;color:#23242c;line-height:14px;text-align:right;">$0</div>
<div class="t r" style="right:51.299999999999955px;top:580.22px;font-size:11.5px;font-weight:400;color:#23242c;line-height:14px;text-align:right;">$0</div>
<svg class="b" style="left:106px;top:638.44px;" width="6" height="9" viewBox="0 0 6 9" fill="none"><path d="M4.8 1 L1.5 4.5 L4.8 8" stroke="#3a3b45" stroke-width="1.3" stroke-linecap="round" stroke-linejoin="round"/></svg>
<svg class="b" style="left:127.5px;top:635.94px;" width="12" height="14" viewBox="0 0 12 14" fill="none"><path d="M1.5 13 V1.5 H10.5 V13 M0.5 13 H11.5" stroke="#a3a5b3" stroke-width="1.1"/><path d="M3.8 4 H4.6 M7.4 4 H8.2 M3.8 6.5 H4.6 M7.4 6.5 H8.2 M3.8 9 H4.6 M7.4 9 H8.2 M5 13 V10.8 H7 V13" stroke="#a3a5b3" stroke-width="1"/></svg>
<div class="t r" style="left:149.3px;top:635.94px;font-size:11px;font-weight:400;color:#1c1d25;line-height:14px;">WSC</div>
<div class="b" style="left:316.2px;top:633.44px;width:53px;height:19px;background:#f0e2d6;border-radius:5.5px"></div>
<svg class="b" style="left:320.2px;top:636.94px" width="12" height="12" viewBox="0 0 12 12" fill="none"><circle cx="6" cy="6" r="4.9" stroke="#262840" stroke-width="1.2"/><circle cx="6" cy="6" r="2.2" stroke="#262840" stroke-width="1.2"/></svg>
<div class="t r" style="left:334.9px;top:636.14px;font-size:11.4px;font-weight:400;color:#22243a;line-height:14px;letter-spacing:-0.1px">Mixed</div>
<div class="t r" style="right:623.7px;top:635.94px;font-size:11.3px;font-weight:400;color:#23242c;line-height:14px;text-align:right;">$<span style="letter-spacing:-1.28px">1</span>,<span style="margin-left:-0.56px;letter-spacing:-1.04px">1</span>73,650</div>
<div class="t r" style="left:529px;top:635.94px;font-size:11.5px;font-weight:400;color:#23242c;line-height:14px;">200h</div>
<div class="t" style="left:637.4px;top:632.28px;font-size:11px;font-weight:700;color:#1f2028;line-height:14px;">34%</div>
<div class="t" style="right:329.5px;top:632.28px;font-size:11px;font-weight:700;color:#1f2028;line-height:14px;text-align:right;">66%</div>
<div class="b" style="left:637.4px;top:647.08px;width:55.200000000000045px;height:6px;background:#4555c5;border-radius:3px"></div>
<div class="b" style="left:696.4px;top:647.08px;width:114.10000000000002px;height:6px;background:#dde0f6;border-radius:3px"></div>
<div class="t r" style="right:237.10000000000002px;top:635.94px;font-size:11.5px;font-weight:400;color:#23242c;line-height:14px;text-align:right;">$65<span style="margin-left:-0.56px;letter-spacing:-1.04px">1</span>,<span style="margin-left:-0.56px;letter-spacing:-1.04px">1</span>40</div>
<div class="t r" style="right:144.20000000000005px;top:635.94px;font-size:11.5px;font-weight:400;color:#23242c;line-height:14px;text-align:right;">$6<span style="margin-left:-0.56px;letter-spacing:-1.04px">1</span>2,<span style="margin-left:-0.56px;letter-spacing:-1.04px">1</span>40</div>
<div class="t r" style="right:51.299999999999955px;top:635.94px;font-size:11.5px;font-weight:400;color:#23242c;line-height:14px;text-align:right;">$60,<span style="margin-left:-0.56px;letter-spacing:-1.04px">1</span>40</div>
<div class="t" style="left:103.3px;top:691.80px;font-size:11px;font-weight:700;color:#1c1d25;line-height:14px;">21</div>
<div class="t r" style="left:103.3px;top:705.40px;font-size:10px;font-weight:400;color:#8b8e9a;line-height:14px;">Total</div>
<div class="b" style="left:315.2px;top:696.3px;width:29.4px;height:15.2px;background:#efa6d9;border-radius:3px 0 0 3px"></div>
<div class="b" style="left:345.9px;top:696.3px;width:14.5px;height:15.2px;background:#a5c9f5"></div>
<div class="b" style="left:362px;top:696.3px;width:45.4px;height:15.2px;background:#c9cbde;border-radius:0 3px 3px 0"></div>
<div class="t" style="right:625.1px;top:691.60px;font-size:11.6px;font-weight:700;color:#1c1d25;line-height:14px;text-align:right;">$ 2,421,243</div>
<div class="t r" style="right:637.6px;top:705.60px;font-size:10px;font-weight:400;color:#8b8e9a;line-height:14px;text-align:right;">Total</div>
<svg class="b" style="left:506.4px;top:710.2px;" width="7" height="5" viewBox="0 0 7 5" fill="none"><path d="M1 1 L3.5 3.5 L6 1" stroke="#9a9ca8" stroke-width="1" stroke-linecap="round"/></svg>
<div class="t" style="left:529px;top:691.60px;font-size:11px;font-weight:700;color:#1c1d25;line-height:14px;">43052 h</div>
<div class="t r" style="left:529px;top:705.60px;font-size:10px;font-weight:400;color:#8b8e9a;line-height:14px;">Total</div>
<svg class="b" style="left:553.5px;top:710.2px;" width="7" height="5" viewBox="0 0 7 5" fill="none"><path d="M1 1 L3.5 3.5 L6 1" stroke="#9a9ca8" stroke-width="1" stroke-linecap="round"/></svg>
<div class="t" style="left:637.4px;top:693.50px;font-size:11px;font-weight:700;color:#1f2028;line-height:14px;">52%</div>
<div class="t" style="right:329.5px;top:693.50px;font-size:11px;font-weight:700;color:#1f2028;line-height:14px;text-align:right;">48%</div>
<div class="b" style="left:637.4px;top:709px;width:77.60000000000002px;height:6px;background:#4555c5;border-radius:3px"></div>
<div class="b" style="left:718.4px;top:709px;width:92.10000000000002px;height:6px;background:#dde0f6;border-radius:3px"></div>
<div class="t" style="right:237.60000000000002px;top:691.60px;font-size:11.6px;font-weight:700;color:#1c1d25;line-height:14px;text-align:right;">$ 3,235,631</div>
<div class="t r" style="right:250.10000000000002px;top:705.60px;font-size:10px;font-weight:400;color:#8b8e9a;line-height:14px;text-align:right;">Total</div>
<svg class="b" style="left:893.9px;top:710.2px;" width="7" height="5" viewBox="0 0 7 5" fill="none"><path d="M1 1 L3.5 3.5 L6 1" stroke="#9a9ca8" stroke-width="1" stroke-linecap="round"/></svg>
<div class="t" style="right:145px;top:691.60px;font-size:11.6px;font-weight:700;color:#1c1d25;line-height:14px;text-align:right;">$ 2,904,142</div>
<div class="t r" style="right:157.5px;top:705.60px;font-size:10px;font-weight:400;color:#8b8e9a;line-height:14px;text-align:right;">Total</div>
<svg class="b" style="left:986.5px;top:710.2px;" width="7" height="5" viewBox="0 0 7 5" fill="none"><path d="M1 1 L3.5 3.5 L6 1" stroke="#9a9ca8" stroke-width="1" stroke-linecap="round"/></svg>
<div class="t" style="right:52px;top:691.60px;font-size:11.6px;font-weight:700;color:#1c1d25;line-height:14px;text-align:right;">$ 368,256</div>
<div class="t r" style="right:64.5px;top:705.60px;font-size:10px;font-weight:400;color:#8b8e9a;line-height:14px;text-align:right;">Total</div>
<svg class="b" style="left:1079.5px;top:710.2px;" width="7" height="5" viewBox="0 0 7 5" fill="none"><path d="M1 1 L3.5 3.5 L6 1" stroke="#9a9ca8" stroke-width="1" stroke-linecap="round"/></svg>
<div class="b" style="left:1112.3px;top:695.1999999999999px;width:2.2px;height:2.2px;background:#2a2b33;border-radius:50%"></div>
<div class="b" style="left:1112.3px;top:699.6999999999999px;width:2.2px;height:2.2px;background:#2a2b33;border-radius:50%"></div>
<div class="b" style="left:1112.3px;top:704.1999999999999px;width:2.2px;height:2.2px;background:#2a2b33;border-radius:50%"></div>
<div class="b" style="left:1101.5px;top:680px;width:1px;height:38px;background:#f0f0f3"></div>
<div class="b" style="left:127.8px;top:235.9px;width:49.2px;height:18.7px;background:#b3a5f1;border-radius:9.4px"></div>
<div class="t r" style="left:134.0px;top:238.50px;font-size:9.7px;font-weight:400;color:#211c48;line-height:14px;-webkit-text-stroke:0.35px currentColor">Retainer</div>
<div class="b" style="left:127.8px;top:255.8px;width:247px;height:265.5px;background:#fff;border-radius:8px;box-shadow:0 2px 10px rgba(20,22,40,0.10),0 0 1px rgba(20,22,40,0.12)"></div>
<div class="t" style="left:140.5px;top:270.00px;font-size:11px;font-weight:700;color:#17181f;line-height:14px;">Retainer budget</div>
<div class="b" style="left:231px;top:269px;width:61.2px;height:15.6px;background:#eeeff2;border-radius:5px"></div>
<div class="t" style="left:236.3px;top:270.00px;font-size:9.5px;font-weight:700;color:#4a4c56;line-height:14px;">$</div>
<div class="t" style="left:246.13px;top:270.20px;font-size:8.5px;color:#3e4049;line-height:14px;transform:scaleX(0.9558);transform-origin:0 0;-webkit-text-stroke:0.2px currentColor">FINANCIAL</div>
<div class="t r" style="left:140.5px;top:294.50px;font-size:9.7px;font-weight:400;color:#8b8e9a;line-height:14px;">Retainer amount</div>
<div class="t r" style="left:236.7px;top:294.50px;font-size:9.7px;font-weight:400;color:#8b8e9a;line-height:14px;">Used</div>
<div class="t" style="left:140.5px;top:310.40px;font-size:11.7px;font-weight:700;color:#17181f;line-height:14px;">$110,500</div>
<div class="t" style="left:236.7px;top:310.40px;font-size:12.2px;font-weight:700;color:#17181f;line-height:14px;">$20,250</div>
<div class="t" style="left:140.5px;top:328.8px;font-size:8px;line-height:12px;color:#4a4c56">(carry over <span style="color:#4f9a77">+$42,521</span>)</div>
<svg class="b" style="left:331px;top:294.3px;" width="33" height="33" viewBox="0 0 33 33" fill="none"><circle cx="16.5" cy="16.5" r="13" stroke="#ebecf0" stroke-width="2.7"/><path d="M17.41 3.53 A13 13 0 0 1 25.2 6.84" stroke="#8a91dc" stroke-width="3.3" stroke-linecap="round"/></svg>
<div class="t" style="left:331px;top:304.10px;font-size:7.8px;font-weight:700;color:#1e1f27;line-height:14px;width:33px;text-align:center;-webkit-text-stroke:0.15px currentColor">18%</div>
<div class="b" style="left:139.8px;top:347.7px;width:222.4px;height:1px;background:#eeeff2"></div>
<div class="b" style="left:139.8px;top:415.7px;width:222.4px;height:1px;background:#eeeff2"></div>
<svg class="b" style="left:140.5px;top:358px" width="12" height="12" viewBox="0 0 12 12" fill="none"><rect x="1" y="1.8" width="10" height="9.6" rx="1.5" stroke="#a3a5b3" stroke-width="1"/><path d="M1 4.3 H11 M3.5 0.5 V2.5 M8.5 0.5 V2.5" stroke="#a3a5b3" stroke-width="1"/><rect x="6.6" y="7.2" width="2.2" height="2.2" fill="#8a8c98"/></svg>
<div class="t r" style="left:158.8px;top:356.50px;font-size:10px;font-weight:400;color:#8b8e9a;line-height:14px;">Period</div>
<div class="t r" style="left:236px;top:356.50px;font-size:10px;font-weight:400;color:#23242c;line-height:14px;">1-30 Sep</div>
<svg class="b" style="left:140.5px;top:376.5px" width="12" height="12" viewBox="0 0 12 12" fill="none"><circle cx="2.6" cy="3" r="1.8" fill="#a3a5b3"/><circle cx="2.6" cy="9" r="1.8" stroke="#a3a5b3" stroke-width="1"/><path d="M6 2 H11 M6 4.2 H11 M6 8 H11 M6 10.2 H11" stroke="#a3a5b3" stroke-width="1"/></svg>
<div class="t r" style="left:158.8px;top:375.20px;font-size:10px;font-weight:400;color:#8b8e9a;line-height:14px;">Budget split</div>
<div class="t r" style="left:236px;top:375.20px;font-size:10px;font-weight:400;color:#23242c;line-height:14px;">4 tasklists</div>
<svg class="b" style="left:140.5px;top:395.2px" width="12" height="12" viewBox="0 0 12 12" fill="none"><path d="M1 2 H2 M1 6 H2 M1 10 H2 M4 2 H11 M4 6 H11 M4 10 H11" stroke="#a3a5b3" stroke-width="1.1"/></svg>
<div class="t r" style="left:158.8px;top:393.90px;font-size:10px;font-weight:400;color:#8b8e9a;line-height:14px;">Occurrence</div>
<div class="t r" style="left:236px;top:393.90px;font-size:10px;font-weight:400;color:#23242c;line-height:14px;">1/3</div>
<svg class="b" style="left:140.5px;top:425.6px" width="12" height="12" viewBox="0 0 12 12" fill="none"><rect x="1.5" y="1" width="9" height="10.5" rx="1" stroke="#a3a5b3" stroke-width="1"/><rect x="3.8" y="3.6" width="4.4" height="4.6" stroke="#a3a5b3" stroke-width="1"/></svg>
<div class="t r" style="left:158.8px;top:424.60px;font-size:10px;font-weight:400;color:#8b8e9a;line-height:14px;">Based on</div>
<div class="t r" style="left:236px;top:424.60px;font-size:10px;font-weight:400;color:#23242c;line-height:14px;">Non-billable time</div>
<svg class="b" style="left:140.5px;top:444.3px" width="12" height="12" viewBox="0 0 12 12" fill="none"><path d="M2 5 A4.2 4.2 0 0 1 9.8 4 M10 7 A4.2 4.2 0 0 1 2.2 8 M8.3 3.8 H10.2 V1.8 M3.7 8.2 H1.8 V10.2" stroke="#a3a5b3" stroke-width="1"/></svg>
<div class="t r" style="left:158.8px;top:443.30px;font-size:10px;font-weight:400;color:#8b8e9a;line-height:14px;">Repeats</div>
<div class="t r" style="left:236px;top:443.30px;font-size:10px;font-weight:400;color:#23242c;line-height:14px;">Monthly</div>
<svg class="b" style="left:140.5px;top:462.8px" width="12" height="12" viewBox="0 0 12 12" fill="none"><rect x="1" y="1.5" width="10" height="10" rx="1.5" stroke="#a3a5b3" stroke-width="1"/><path d="M1 4.3 H11" stroke="#a3a5b3" stroke-width="1"/></svg>
<div class="t r" style="left:158.8px;top:461.80px;font-size:10px;font-weight:400;color:#8b8e9a;line-height:14px;">Span</div>
<div class="t r" style="left:236px;top:461.80px;font-size:10px;font-weight:400;color:#23242c;line-height:14px;">1 Sep - 31 Nov</div>
<div class="t r" style="left:236px;top:477.00px;font-size:10px;font-weight:400;color:#8b8e9a;line-height:14px;">(3 occurrences)</div>
<svg class="b" style="left:141.5px;top:496px" width="10" height="14" viewBox="0 0 10 14" fill="none"><text x="0" y="11" font-family="Liberation Sans" font-size="12" fill="#a3a5b3">$</text></svg>
<div class="t r" style="left:158.8px;top:495.80px;font-size:10px;font-weight:400;color:#8b8e9a;line-height:14px;">Billable rate</div>
<div class="t r" style="left:236px;top:495.80px;font-size:10px;font-weight:400;color:#23242c;line-height:14px;">$90</div>
<svg class="b" style="left:153px;top:244px;" width="12" height="16" viewBox="0 0 12 16" fill="none"><path d="M1.5 1 L1.5 12.5 L4.3 9.8 L6.5 14.5 L8.4 13.6 L6.3 9.1 L10 9.1 Z" fill="#111" stroke="#fff" stroke-width="0.9" stroke-linejoin="round"/></svg>
</body></html>
